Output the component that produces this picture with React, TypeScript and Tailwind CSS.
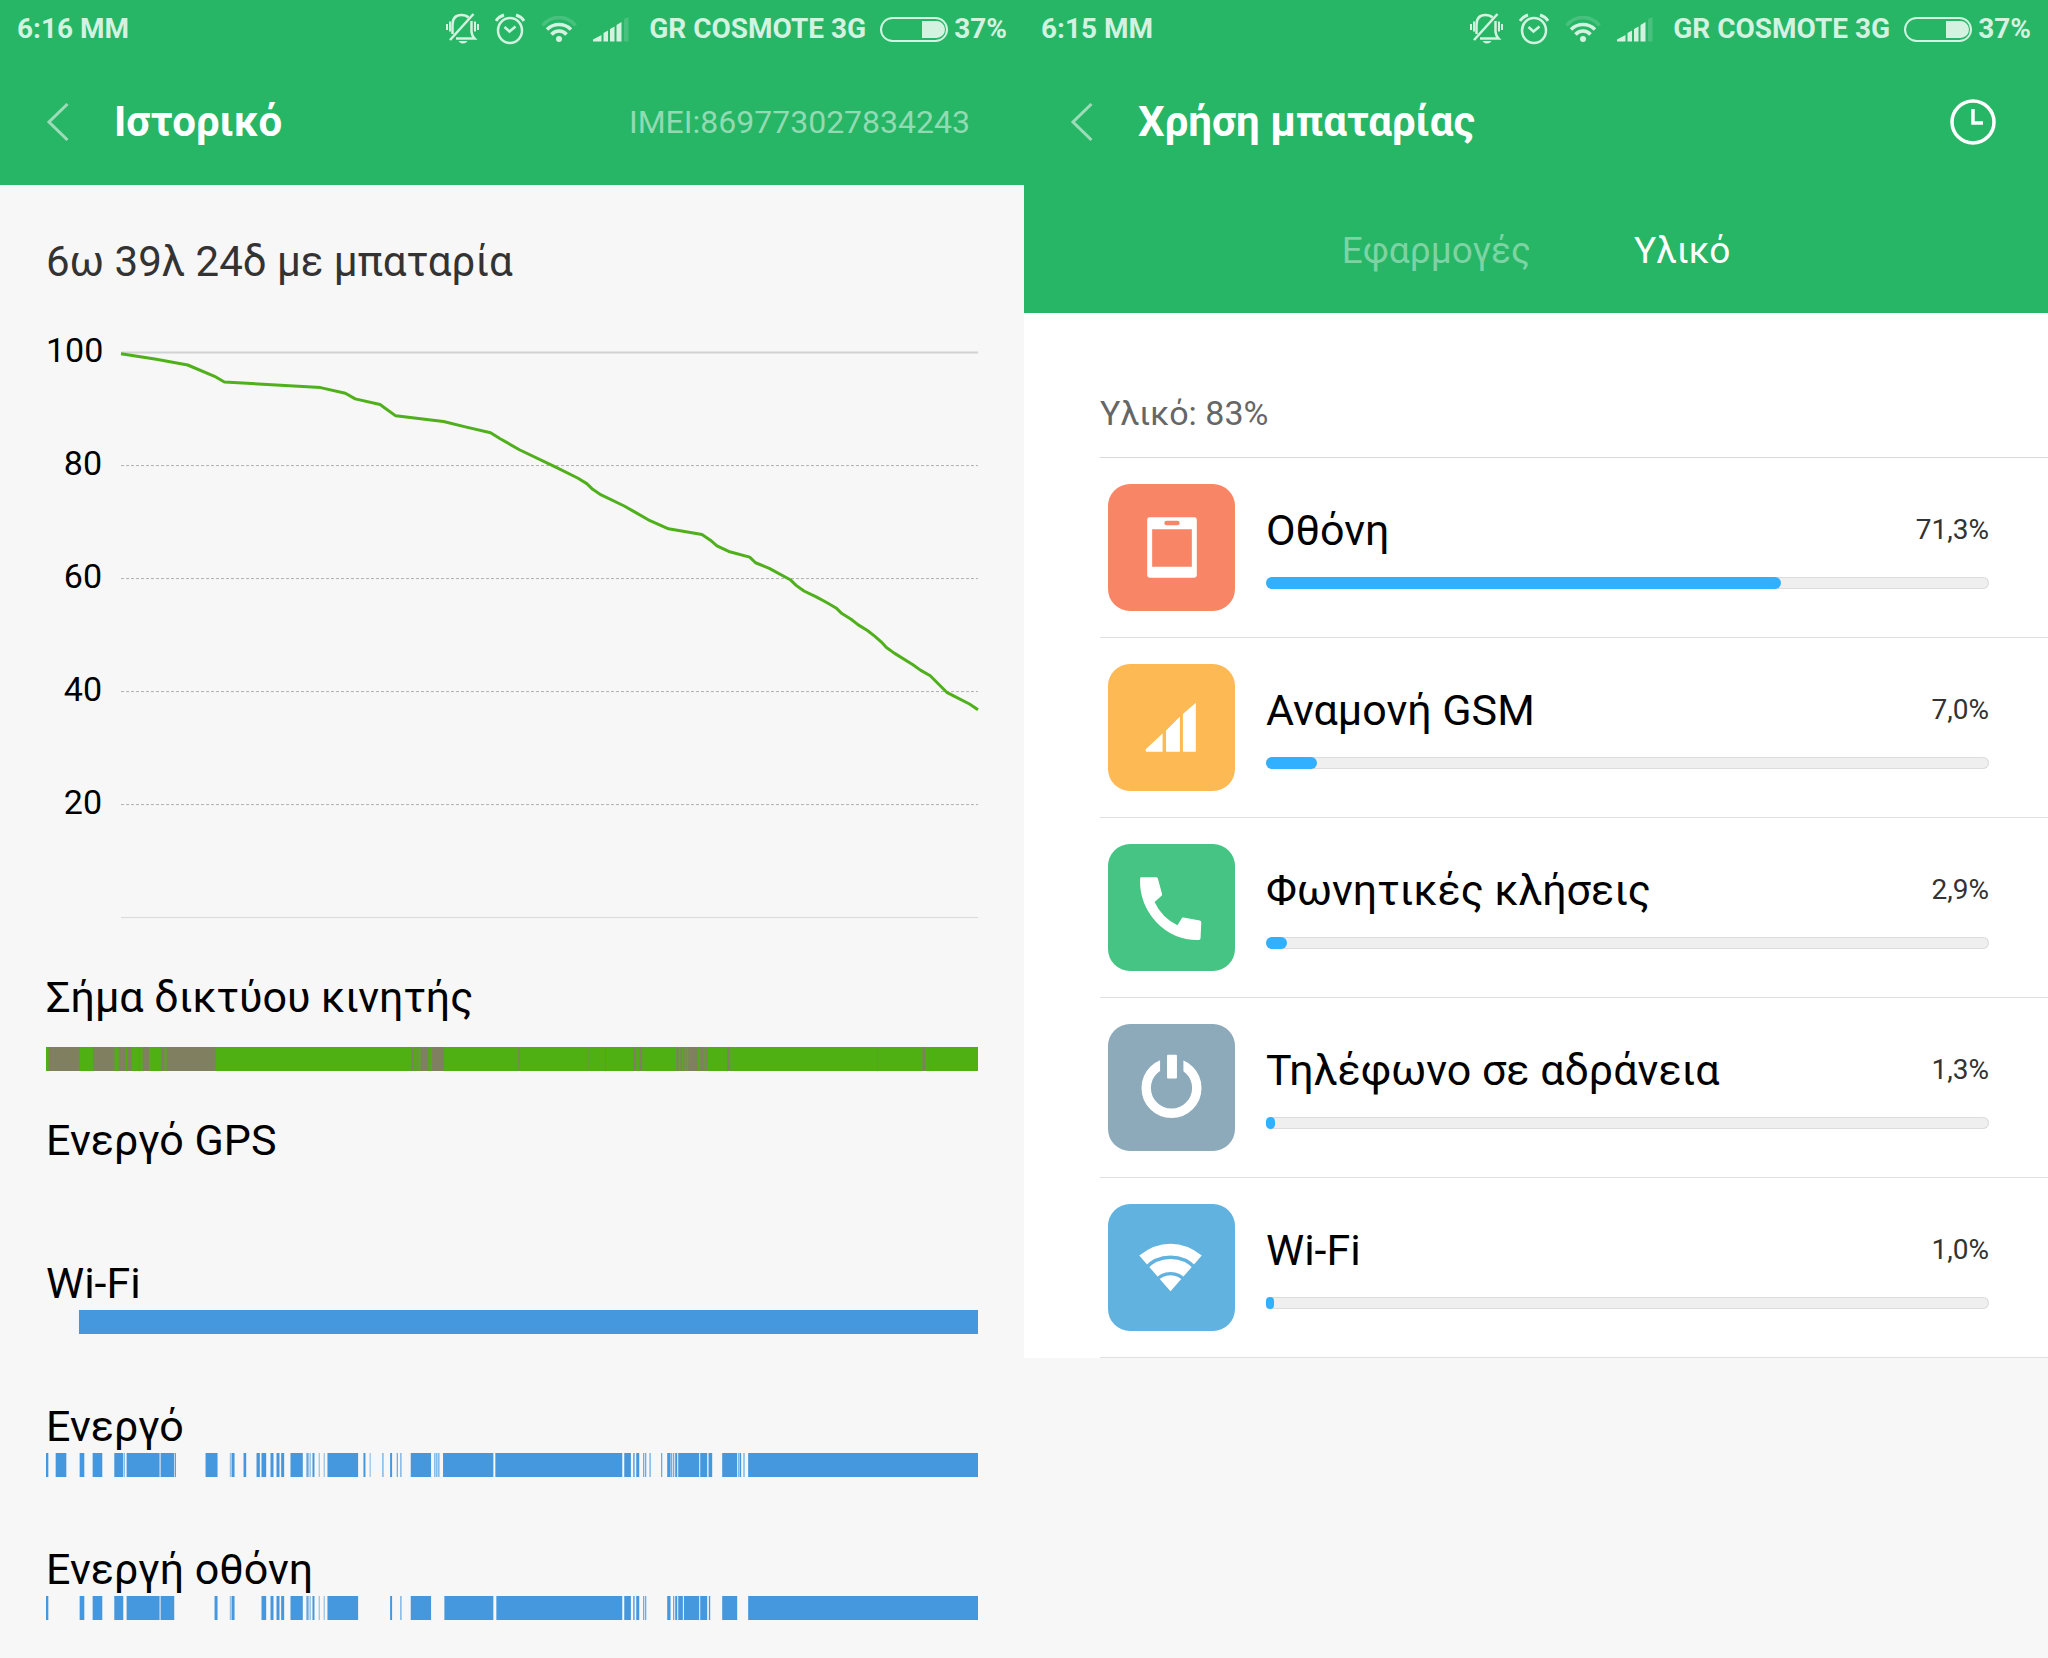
import React from 'react';

type Segment = [number, number];

// Timelines share one horizontal scale, in ticks.
const TIMELINE_START = 46;
const TIMELINE_LENGTH = 2798;

const WEAK_SIGNAL: Segment[] = [
  [54, 147], [187, 252], [264, 285], [290, 303], [325, 328], [336, 355], [391, 402], [408, 555],
  [1143, 1151], [1155, 1158], [1161, 1164], [1170, 1192], [1195, 1198], [1204, 1241], [1464, 1467],
  [1672, 1674], [1724, 1727], [1809, 1818], [1827, 1836], [1938, 1945], [1950, 1956], [1960, 1964],
  [1968, 1970], [1974, 2004], [2010, 2023], [2026, 2032], [2091, 2100], [2541, 2543], [2677, 2686],
  [2698, 2700],
];

const WIFI: Segment[] = [[145, 2844]];

const AWAKE: Segment[] = [
  [46, 53], [75, 107], [147, 161], [186, 215], [251, 278], [280, 282], [288, 387], [390, 431],
  [433, 436], [525, 561], [598, 600], [603, 612], [639, 647], [678, 688], [693, 707], [720, 729],
  [738, 747], [752, 761], [780, 817], [828, 832], [834, 836], [838, 840], [846, 852], [865, 867],
  [880, 882], [891, 983], [999, 1005], [1018, 1020], [1056, 1059], [1079, 1085], [1099, 1102],
  [1110, 1113], [1141, 1202], [1212, 1215], [1218, 1221], [1224, 1227], [1238, 1389], [1395, 1776],
  [1782, 1802], [1809, 1813], [1818, 1827], [1839, 1842], [1845, 1848], [1858, 1861], [1893, 1896],
  [1911, 1921], [1923, 1926], [1929, 1932], [1935, 1941], [1944, 2007], [2010, 2031], [2035, 2046],
  [2076, 2121], [2124, 2126], [2128, 2133], [2140, 2143], [2154, 2844],
];

const SCREEN_ON: Segment[] = [
  [46, 53], [147, 161], [186, 215], [251, 278], [288, 387], [390, 431], [552, 561], [598, 600],
  [603, 612], [693, 707], [720, 729], [738, 747], [752, 761], [780, 817], [828, 832], [834, 836],
  [838, 840], [846, 852], [865, 867], [880, 882], [891, 983], [1079, 1085], [1110, 1113],
  [1141, 1202], [1242, 1389], [1398, 1776], [1782, 1802], [1809, 1813], [1818, 1827], [1839, 1842],
  [1845, 1848], [1911, 1921], [1929, 1932], [1935, 1941], [1944, 1958], [1961, 2007], [2010, 2031],
  [2036, 2040], [2076, 2121], [2154, 2844],
];

// [time, battery level]
const LEVELS: [number, number][] = [
  [0, 100], [54, 99], [102, 98], [143, 96], [158, 95], [305, 94], [343, 93], [358, 92], [396, 91],
  [408, 90], [420, 89], [493, 88], [528, 87], [565, 86], [579, 85], [609, 83], [663, 80], [698, 78],
  [712, 77], [721, 76], [734, 75], [770, 73], [785, 72], [806, 70.6], [837, 69], [888, 68],
  [901, 67], [911, 66], [929, 65], [961, 64], [970, 63], [991, 62], [1023, 60], [1032, 59],
  [1044, 58], [1062, 57], [1078, 56], [1093, 55], [1102, 54], [1116, 53], [1127, 52], [1141, 51],
  [1152, 50], [1162, 49], [1170, 48], [1182, 47], [1210, 45], [1222, 44], [1237, 43], [1263, 40],
  [1297, 38], [1310, 37],
];

const TILE = 'h-[127px] w-[127px] shrink-0 rounded-[22px]';

const ScreenIcon = () => (
  <svg viewBox="0 0 128 128" className={`${TILE} bg-[#f88566]`} fill="#fff" aria-hidden="true">
    <path
      fillRule="evenodd"
      d="M42 33.500h45a2.500 2.500 0 0 1 2.500 2.500v56a2.500 2.500 0 0 1-2.500 2.500H42a2.500 2.500 0 0 1-2.500-2.500V36a2.500 2.500 0 0 1 2.500-2.500zM44.500 45.500v38h40v-38zM59 37a2 2 0 0 0 0 4.500h11a2 2 0 0 0 0-4.500z"
    />
  </svg>
);

const CellIcon = () => (
  <svg viewBox="0 0 128 128" className={`${TILE} bg-[#fdb954]`} fill="#fff" aria-hidden="true">
    <path d="M38 86L55 70V88.500H39Q38 88.500 38 87.500zM58.500 67L72.500 53V88.500H58.500zM75.500 50.500L88.500 39V88.500H75.500z" />
  </svg>
);

const PhoneIcon = () => (
  <svg viewBox="0 0 128 128" className={`${TILE} bg-[#45c483]`} fill="#fff" aria-hidden="true">
    <path d="M33.500 33.500H48.500Q50 33.500 50.300 35L54.500 50.500Q54.700 51.500 54 52.200L47 58.500Q54 74 70 82L74.200 75Q74.700 74 76 74.200L92.500 77Q94.200 77.500 94 79L93.300 95Q93.300 96.700 91.500 96.700Q66 97 48.500 78.500Q31.500 60 32.300 35Q32.300 33.500 33.500 33.500z" />
  </svg>
);

const PowerIcon = () => (
  <svg viewBox="0 0 128 128" className={`${TILE} bg-[#8caaba]`} aria-hidden="true">
    <circle cx="64" cy="64.500" r="25.500" fill="none" stroke="#fff" strokeWidth="9.500" />
    <rect x="52.500" y="30" width="23.500" height="26" fill="#8caaba" />
    <rect x="59.500" y="31" width="10" height="24" rx="1" fill="#fff" />
  </svg>
);

const WifiIcon = () => (
  <svg viewBox="0 0 128 128" className={`${TILE} bg-[#61b2de]`} aria-hidden="true">
    <path d="M63 88L31.500 52Q46 40 63 40T94.500 52z" fill="#fff" />
    <path d="M37 65.500A34.500 34.500 0 0 1 89 65.500M48 77.500A19 19 0 0 1 78 77.500" fill="none" stroke="#61b2de" strokeWidth="3.500" />
  </svg>
);

const USAGE = [
  { name: 'Οθόνη', share: 71.3, label: '71,3%', icon: <ScreenIcon /> },
  { name: 'Αναμονή GSM', share: 7, label: '7,0%', icon: <CellIcon /> },
  { name: 'Φωνητικές κλήσεις', share: 2.9, label: '2,9%', icon: <PhoneIcon /> },
  { name: 'Τηλέφωνο σε αδράνεια', share: 1.3, label: '1,3%', icon: <PowerIcon /> },
  { name: 'Wi-Fi', share: 1, label: '1,0%', icon: <WifiIcon /> },
];

const StatusBar = ({ time }: { time: string }) => (
  <div className="flex h-[58px] items-center justify-between px-[17px] text-[28px] leading-8 font-bold text-[#d3f2e0]">
    <span>{time}</span>
    <div className="flex items-center gap-5">
      <div className="flex items-center gap-4">
        <svg width="33" height="32" viewBox="0 0 33 32" fill="none" stroke="currentColor" strokeWidth="2" aria-hidden="true">
          <path d="M6.500 21V12Q6.500 2 15.500 2Q20 2 22.500 4.500M25.500 8V19Q26 23 28.500 25.500H10" strokeWidth="2.500" />
          <path d="M27.500 1L4 27" strokeWidth="2.500" />
          <path d="M1 11V17M4 8.500V18.500M29 8.500V18.500M32 11V17" />
          <path d="M12.500 28H21.500Q20 30.500 17 30.500T12.500 28z" fill="currentColor" stroke="none" />
        </svg>
        <svg width="30" height="32" viewBox="0 0 30 32" fill="none" stroke="currentColor" strokeWidth="2.500" aria-hidden="true">
          <ellipse cx="15" cy="17.500" rx="12" ry="12.500" />
          <path d="M9.500 14L14.500 18.500L20.500 13.500" />
          <path d="M1 8Q4 3.500 9 2M29 8Q26 3.500 21 2" strokeWidth="3" />
        </svg>
        <svg width="36" height="28" viewBox="0 0 36 28" fill="none" stroke="currentColor" strokeWidth="3.500" aria-hidden="true">
          <path d="M1.500 10.500Q8 2.500 18 2.500T34.500 10.500" opacity="0.200" />
          <path d="M6 14.500Q11 9.500 18 9.500T30 14.500M10.500 19.500Q13.500 16 18 16T25.500 19.500" />
          <circle cx="18" cy="24" r="3" fill="currentColor" stroke="none" />
        </svg>
        <svg width="36" height="25" viewBox="0 0 36 25" fill="currentColor" aria-hidden="true">
          <path d="M0 22.500L8.500 18V24.500H0zM10.500 16L15 13.500V24.500H10.500zM17 12L21.500 9.500V24.500H17zM23.500 8L28.500 5V24.500H23.500z" />
          <path d="M31 2L35.500 0V24.500H31z" opacity="0.200" />
        </svg>
      </div>
      <div className="flex items-center gap-3.5">
        <span>GR COSMOTE 3G</span>
        <div className="flex items-center gap-1.5">
          <svg width="68" height="25" viewBox="0 0 68 25" aria-hidden="true">
            <rect x="1" y="1" width="66" height="23" rx="11.500" fill="none" stroke="currentColor" strokeWidth="2" />
            <path d="M42 4H56.500A8.500 8.500 0 0 1 56.500 21H42z" fill="currentColor" />
          </svg>
          <span>37%</span>
        </div>
      </div>
    </div>
  </div>
);

const TitleBar = ({ title, children }: { title: string; children: React.ReactNode }) => (
  <div className="flex h-[127px] items-center pl-[46px]">
    <button type="button" aria-label="Πίσω" className="mr-[45px]">
      <svg width="23" height="38" viewBox="0 0 23 38" fill="none" stroke="#9ddcb9" strokeWidth="3" aria-hidden="true">
        <path d="M21.500 1L3 19L21.500 37" />
      </svg>
    </button>
    <h1 className="flex-1 text-[42px] leading-12 font-bold text-white">{title}</h1>
    {children}
  </div>
);

const LevelChart = () => (
  <div className="mt-11 flex gap-[19px]">
    <div className="w-14 text-right text-[34px] leading-10 text-black">
      {[100, 80, 60, 40, 20].map((level) => (
        <div key={level} className="h-[113px]">{level}</div>
      ))}
    </div>
    <svg
      viewBox="0 0 1310 100"
      preserveAspectRatio="none"
      className="mt-[22px] h-[565px] min-w-0 flex-1 overflow-visible"
      fill="none"
      role="img"
      aria-label="Στάθμη μπαταρίας"
    >
      <path d="M0 0.100H1310" stroke="#d2d2d2" strokeWidth="2" vectorEffect="non-scaling-stroke" />
      <path d="M0 20.100H1310M0 40.100H1310M0 60.100H1310M0 80.100H1310" stroke="#b0b0b0" strokeWidth="1" strokeDasharray="3 2" vectorEffect="non-scaling-stroke" />
      <path d="M0 100.100H1310" stroke="#d8d8d8" strokeWidth="1" vectorEffect="non-scaling-stroke" />
      <polyline
        points={LEVELS.map(([time, level]) => `${time},${100.3 - level}`).join(' ')}
        stroke="#4fb01c"
        strokeWidth="3"
        strokeLinejoin="round"
        vectorEffect="non-scaling-stroke"
      />
    </svg>
  </div>
);

interface TimelineProps {
  segments: Segment[];
  color: string;
  track?: string;
}

const Timeline = ({ segments, color, track = 'none' }: TimelineProps) => (
  <svg
    viewBox={`${TIMELINE_START} 0 ${TIMELINE_LENGTH} 25`}
    preserveAspectRatio="none"
    className="h-6 w-full"
    aria-hidden="true"
  >
    <rect x={TIMELINE_START} width={TIMELINE_LENGTH} height="25" fill={track} />
    {segments.map(([from, to]) => (
      <rect key={from} x={from} width={to - from} height="25" fill={color} />
    ))}
  </svg>
);

const HistoryRow = ({ title, children }: { title: string; children?: React.ReactNode }) => (
  <section className="h-[143px]">
    <h2 className="text-[43px] leading-[46px] text-black">{title}</h2>
    {children}
  </section>
);

const HistoryScreen = () => (
  <main className="min-w-0 flex-1 bg-[#f7f7f7]">
    <header className="bg-[#26b666]">
      <StatusBar time="6:16 MM" />
      <TitleBar title="Ιστορικό">
        <span className="pr-[54px] text-[32px] leading-10 text-[#93dab2]">IMEI:869773027834243</span>
      </TitleBar>
    </header>
    <div className="px-[46px] pt-[53px]">
      <p className="text-[42px] leading-12 text-[#333]">6ω 39λ 24δ με μπαταρία</p>
      <LevelChart />
      <div className="mt-[57px]">
        <HistoryRow title="Σήμα δικτύου κινητής">
          <div className="mt-[27px]">
            <Timeline segments={WEAK_SIGNAL} color="#808060" track="#4fb014" />
          </div>
        </HistoryRow>
        <HistoryRow title="Ενεργό GPS" />
        <HistoryRow title="Wi-Fi">
          <div className="mt-1">
            <Timeline segments={WIFI} color="#4698de" />
          </div>
        </HistoryRow>
        <HistoryRow title="Ενεργό">
          <div className="mt-1">
            <Timeline segments={AWAKE} color="#4698de" />
          </div>
        </HistoryRow>
        <section>
          <h2 className="text-[43px] leading-[46px] text-black">Ενεργή οθόνη</h2>
          <div className="mt-1">
            <Timeline segments={SCREEN_ON} color="#4698de" />
          </div>
        </section>
      </div>
    </div>
  </main>
);

const UsageScreen = () => (
  <main className="min-w-0 flex-1 bg-[#f7f7f7]">
    <header className="bg-[#26b666]">
      <StatusBar time="6:15 MM" />
      <TitleBar title="Χρήση μπαταρίας">
        <button type="button" aria-label="Ιστορικό" className="mr-[52px]">
          <svg width="46" height="46" viewBox="0 0 46 46" fill="none" stroke="#fff" strokeWidth="3.500" aria-hidden="true">
            <circle cx="23" cy="23" r="21" />
            <path d="M23 10V24H33" />
          </svg>
        </button>
      </TitleBar>
      <nav className="flex h-32 items-center justify-center gap-[103px] pt-1 text-[37px] leading-12">
        <button type="button" className="text-[#7dd3a3]">Εφαρμογές</button>
        <button type="button" className="text-white" aria-current="page">Υλικό</button>
      </nav>
    </header>
    <div className="bg-white pt-20 pl-[76px]">
      <h2 className="pb-6 text-[34px] leading-10 text-[#666]">Υλικό: 83%</h2>
      <ul className="border-t border-[#d9d9d9]">
        {USAGE.map((item) => (
          <li key={item.name} className="flex h-[180px] items-center gap-[31px] border-b border-[#e0e0e0] pr-[59px] pl-2">
            {item.icon}
            <div className="flex-1">
              <div className="flex items-center justify-between">
                <span className="text-[43px] leading-[46px] text-black">{item.name}</span>
                <span className="text-[28px] leading-8 text-[#333]">{item.label}</span>
              </div>
              <div
                role="progressbar"
                aria-label={item.name}
                aria-valuenow={item.share}
                className="mt-6 h-3 rounded-full bg-[#efefef] inset-ring inset-ring-[#dcdcdc]"
              >
                <div className="h-3 min-w-2 rounded-full bg-[#31b0ff]" style={{ width: `${item.share}%` }} />
              </div>
            </div>
          </li>
        ))}
      </ul>
    </div>
  </main>
);

export default function App() {
  return (
    <div className="flex min-h-screen font-[Roboto,'Noto_Sans',sans-serif]">
      <HistoryScreen />
      <UsageScreen />
    </div>
  );
}
